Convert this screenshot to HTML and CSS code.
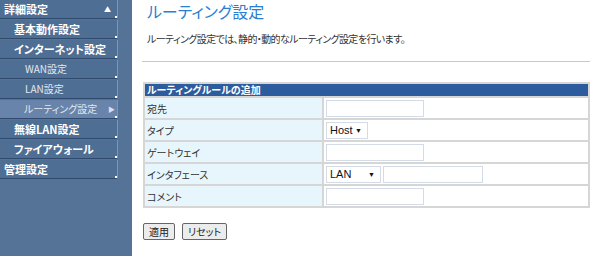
FILE: index.html
```html
<!DOCTYPE html>
<html lang="ja">
<head>
  <meta charset="UTF-8">
  <title>ルーティング設定</title>
  <link rel="stylesheet" href="styles.css">
</head>
<body>
  <div class="page">
    <div class="side">
      <div class="item top">詳細設定<span class="mark">▲</span></div>
      <div class="item lv1">基本動作設定</div>
      <div class="item lv1">インターネット設定</div>
      <div class="item lv2">WAN設定</div>
      <div class="item lv2">LAN設定</div>
      <div class="item lv2 active">ルーティング設定<span class="mark arrow">▶</span></div>
      <div class="item lv1">無線LAN設定</div>
      <div class="item lv1">ファイアウォール</div>
      <div class="item top">管理設定</div>
    </div>

    <div class="content">
      <h1>ルーティング設定</h1>
      <p class="desc">ルーティング設定では、静的・動的なルーティング設定を行います。</p>
      <hr>

      <table class="rules">
        <tr><th colspan="2">ルーティングルールの追加</th></tr>
        <tr>
          <td class="label">宛先</td>
          <td class="value"><input type="text" class="txt"></td>
        </tr>
        <tr>
          <td class="label">タイプ</td>
          <td class="value"><span class="sel sel-host">Host<i>▼</i></span></td>
        </tr>
        <tr>
          <td class="label">ゲートウェイ</td>
          <td class="value"><input type="text" class="txt"></td>
        </tr>
        <tr>
          <td class="label">インタフェース</td>
          <td class="value"><span class="sel sel-lan">LAN<i>▼</i></span><input type="text" class="txt wide"></td>
        </tr>
        <tr>
          <td class="label">コメント</td>
          <td class="value"><input type="text" class="txt"></td>
        </tr>
      </table>

      <div class="buttons">
        <button>適用</button>
        <button>リセット</button>
      </div>
    </div>
  </div>
</body>
</html>
```

FILE: styles.css
```css
body {
  margin: 0;
  font-family: "Noto Sans CJK JP", "DejaVu Sans", sans-serif;
  font-feature-settings: "palt";
  font-size: 10px;
  color: #333;
  background: #fff;
}

.page {
  display: flex;
  height: 256px;
}

.side {
  width: 132px;
  flex-shrink: 0;
  background: #547397;
  display: flex;
  flex-direction: column;
  gap: 1px;
}

.item {
  position: relative;
  width: 117px;
  height: 18px;
  line-height: 18px;
  color: #fff;
  font-weight: bold;
  font-size: 11px;
  background: #4f6e94;
  border-right: 1px solid #7d96b4;
  border-bottom: 1px solid #2f4a6c;
  white-space: nowrap;
}

.item::after {
  content: "";
  position: absolute;
  right: 0;
  bottom: 0;
  width: 2px;
  height: 2px;
  background: #fff;
}

.top { padding-left: 4px; width: 113px; }
.lv1 { padding-left: 14px; width: 103px; }
.lv2 {
  padding-left: 25px;
  width: 92px;
  font-weight: normal;
  font-size: 10px;
  color: #e2e8f0;
}

.active {
  background: #6884aa;
  padding-left: 24px;
  width: 93px;
}

.mark {
  position: absolute;
  right: 6px;
  top: 0;
  font-size: 7px;
  color: #fff;
}

.arrow {
  right: 2px;
  color: #dde;
}

.content {
  padding: 0 12px 0 10px;
  flex: 1;
}

h1 {
  margin: 0 0 0 5px;
  font-size: 16px;
  font-weight: normal;
  color: #2a7fd2;
  line-height: 22px;
}

.desc {
  margin: 10px 0 0 5px;
  line-height: 14px;
  letter-spacing: -0.6px;
}

hr {
  margin: 15px 0 0 0;
  border: 0;
  border-top: 1px solid #c8c8c8;
}

.rules {
  margin-top: 20px;
  margin-left: 1px;
  width: 447px;
  border-collapse: collapse;
}

.rules th {
  background: #2d5c9e;
  color: #fff;
  text-align: left;
  font-size: 10px;
  height: 12px;
  line-height: 12px;
  padding: 0 2px;
  border: 2px solid #d6d6d6;
}

.rules td {
  border: 2px solid #d6d6d6;
  height: 20px;
  padding: 0;
}

.label {
  width: 175px;
  background: #e7f6fc;
  padding-left: 2px !important;
}

.value {
  background: #fff;
  padding-left: 2px !important;
}

.txt {
  width: 92px;
  height: 13px;
  margin: 0;
  padding: 1px 2px;
  border: 1px solid #d3dbe6;
  vertical-align: middle;
  font-size: 11px;
}

.wide {
  width: 94px;
  margin-left: 2px;
}

.sel {
  display: inline-block;
  vertical-align: middle;
  height: 15px;
  line-height: 15px;
  border: 1px solid #d3dbe6;
  padding-left: 3px;
  font-family: "Liberation Sans", Arial, sans-serif;
  font-size: 11px;
  color: #111;
  position: relative;
}

.sel i {
  font-style: normal;
  font-size: 7px;
  position: absolute;
  right: 5px;
  top: 0;
}

.sel-host { width: 37px; }
.sel-lan { width: 50px; }

.buttons {
  margin-top: 15px;
  display: flex;
  gap: 7px;
  padding-left: 1px;
}

button {
  font-family: "Noto Sans CJK JP", sans-serif;
  font-feature-settings: "palt";
  font-size: 10px;
  height: 17px;
  line-height: 12px;
  padding: 0 5px;
  background: #ececec;
  border: 1px solid #666;
  border-radius: 2px;
  color: #222;
}
```
